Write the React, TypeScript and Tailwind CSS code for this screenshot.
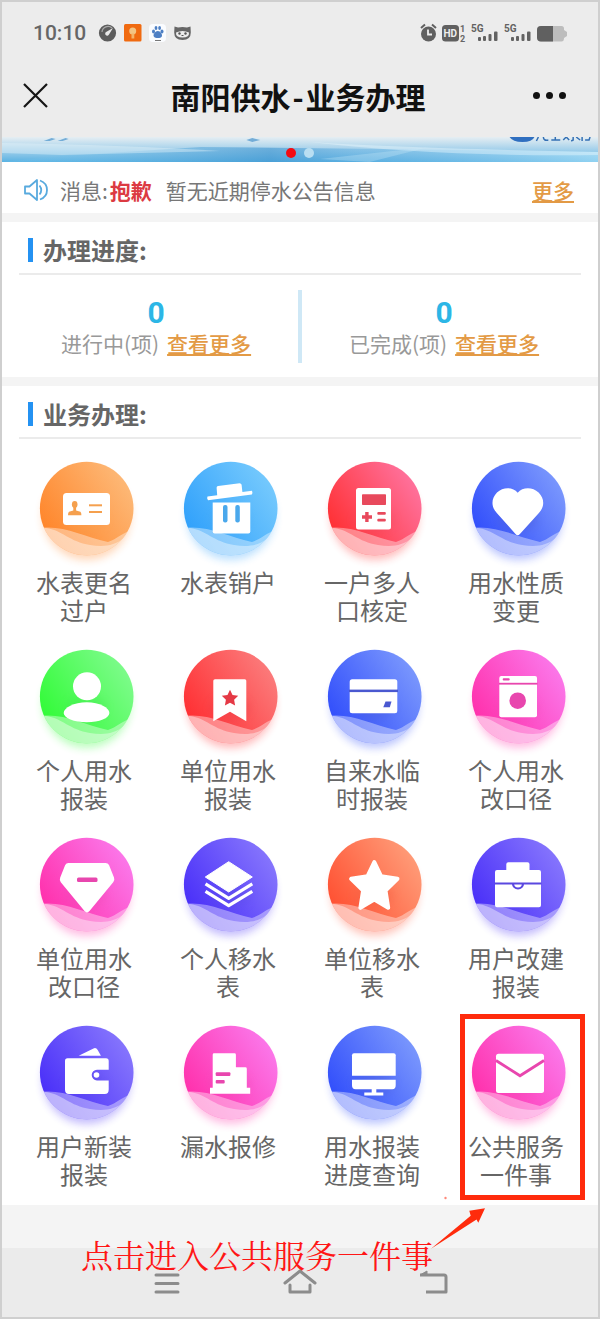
// App.tsx
import React from "react";

type Tone = "orange" | "sky" | "red" | "blue" | "green" | "scarlet" | "pink" | "violet" | "coral";

interface Service {
  name: string;
  tone: Tone;
  glyph: (ink: string) => React.ReactNode;
  marked?: boolean;
}

// from = lower left, to = upper right, ink = details cut in the white glyph
const TONES: Record<Tone, { from: string; to: string; ink: string }> = {
  orange: { from: "#ff8124", to: "#fdbc7c", ink: "#f5a04e" },
  sky: { from: "#2a9dfb", to: "#7accfd", ink: "#4aa8ec" },
  red: { from: "#ff2a2a", to: "#ff76a4", ink: "#e8495c" },
  blue: { from: "#2b48fb", to: "#7f9cfd", ink: "#4a58d0" },
  green: { from: "#2bfb30", to: "#82fb90", ink: "#3be04a" },
  scarlet: { from: "#ff282c", to: "#fb8080", ink: "#e53945" },
  pink: { from: "#ff2aa6", to: "#fb7cee", ink: "#e846ae" },
  violet: { from: "#4429f8", to: "#8a7afd", ink: "#5a48e0" },
  coral: { from: "#ff4a2c", to: "#ffa07c", ink: "#f0583c" },
};

const SERVICES: Service[] = [
  {
    name: "水表更名过户",
    tone: "orange",
    glyph: (ink) => (
      <>
        <rect x="39" y="39" width="47" height="32" rx="3.5" />
        <g fill={ink}>
          <ellipse cx="50.7" cy="50.5" rx="2.8" ry="3.4" />
          <path d="M49.3 52h2.8v4.400l4.300 1.400q1 .6 1 3.400H44q0-2.800 1-3.400l4.300-1.400z" />
          <rect x="65" y="50.300" width="13" height="2" />
          <rect x="65" y="57" width="13" height="2" />
        </g>
      </>
    ),
  },
  {
    name: "水表销户",
    tone: "sky",
    glyph: (ink) => (
      <>
        <path d="M39.500 42.500l9.700-1.200-.6-7.500q0-1.600 1.500-1.800l21.500-2.700q1.700 0 2 1.500l.8 7.300 9.600-1.300q1 2.500-.2 3.700L40 46.300q-1.500-2-.5-3.800z" />
        <path d="M44.700 48.500h37.600v29q0 2-2 2H46.700q-2 0-2-2z" />
        <rect x="55" y="51" width="4.500" height="17.500" rx="2" fill={ink} />
        <rect x="67.300" y="51" width="4.500" height="17.500" rx="2" fill={ink} />
      </>
    ),
  },
  {
    name: "一户多人口核定",
    tone: "red",
    glyph: (ink) => (
      <>
        <rect x="44" y="34" width="35" height="41.500" rx="2.500" />
        <g fill={ink}>
          <rect x="50" y="40.300" width="24" height="10.700" rx=".8" />
          <path d="M53.200 58h3.400v3.300H60v3.400h-3.400V68h-3.400v-3.300H50v-3.400h3.200z" />
          <rect x="65.300" y="58" width="8.500" height="2.800" rx="1" />
          <rect x="65.300" y="64.700" width="8.500" height="2.800" rx="1" />
        </g>
      </>
    ),
  },
  {
    name: "用水性质变更",
    tone: "blue",
    glyph: () => (
      <path d="M61.700 38.700C57 33 47 32.800 41 38.600c-6 6-6 14.500-.2 20.400l18.700 21q2.200 2.500 4.400 0l19-21c5.800-6 5.800-14.400-.3-20.400-6-5.800-16-5.600-20.900.1z" />
    ),
  },
  {
    name: "个人用水报装",
    tone: "green",
    glyph: () => (
      <>
        <circle cx="63" cy="44.300" r="14" />
        <path d="M39.700 71c0-5 10-10.700 23-10.700S85.400 66 85.400 71s-10 9.300-22.700 9.300S39.700 76 39.700 71z" />
      </>
    ),
  },
  {
    name: "单位用水报装",
    tone: "scarlet",
    glyph: (ink) => (
      <>
        <path d="M47 37.300h29.800q1.500 0 1.500 1.500v40.500L62 69.800l-16.700 9.500V38.800q0-1.500 1.700-1.500z" />
        <path
          d="M62 47.800l2.500 5.100 5.700.8-4.100 4 1 5.700-5.100-2.700-5.100 2.700 1-5.700-4.100-4 5.700-.8z"
          fill={ink}
        />
      </>
    ),
  },
  {
    name: "自来水临时报装",
    tone: "blue",
    glyph: (ink) => (
      <>
        <rect x="37.700" y="37.300" width="47.600" height="34" rx="2.500" />
        <rect x="37" y="47.600" width="49" height="2.500" fill={ink} />
        <path d="M73.500 59.600h6l-1.700 5.600h-6.500z" fill={ink} />
      </>
    ),
  },
  {
    name: "个人用水改口径",
    tone: "pink",
    glyph: (ink) => (
      <>
        <rect x="43.300" y="34" width="37.700" height="41.300" rx="2" />
        <g fill={ink}>
          <rect x="43" y="40.800" width="38.500" height="1.800" />
          <rect x="46.700" y="36.300" width="7" height="2.200" rx="1" />
          <circle cx="61.700" cy="58.700" r="8.300" />
        </g>
      </>
    ),
  },
  {
    name: "单位用水改口径",
    tone: "pink",
    glyph: (ink) => (
      <>
        <path d="M44.500 33h37q2.500 0 3.500 2l5 12.500q1 2.500-.8 4.800L65.500 81q-2.500 2.800-5 0L36.800 52.300q-1.600-2.300-.6-4.800l5-12.500q1-2 3.300-2z" />
        <rect x="53" y="47.500" width="20.500" height="4.600" rx="1.500" fill={ink} />
      </>
    ),
  },
  {
    name: "个人移水表",
    tone: "violet",
    glyph: () => (
      <>
        <path d="M60.700 31.700L84.300 47 60.700 62 37.300 47z" stroke="#fff" strokeLinejoin="round" />
        <path
          d="M37.500 53.800l23.200 14.500 23.600-14.500M37.500 61.300l23.200 14.300 23.600-14.300"
          fill="none"
          stroke="#fff"
          strokeWidth="3.200"
          strokeLinejoin="round"
        />
      </>
    ),
  },
  {
    name: "单位移水表",
    tone: "coral",
    glyph: () => (
      <path
        d="M62.300 32l6.700 14.200 16.500 2.600-12 11.800 2.700 17.200-13.900-8.200-13.900 8.200 2.700-17.200-12-11.800 16.500-2.600z"
        stroke="#fff"
        strokeWidth="4"
        strokeLinejoin="round"
      />
    ),
  },
  {
    name: "用户改建报装",
    tone: "violet",
    glyph: (ink) => (
      <>
        <path d="M52.300 32.300h19.200q2 0 2 2V40H83q2 0 2 2v33.300q0 2-2 2H41q-2 0-2-2V42q0-2 2-2h9.300v-5.700q0-2 2-2z" />
        <g fill="none" stroke={ink} strokeWidth="2.200">
          <path d="M38.500 53.500h47" />
          <path d="M57 53.500a5 5 0 0 0 10 0" />
        </g>
      </>
    ),
  },
  {
    name: "用户新装报装",
    tone: "violet",
    glyph: () => (
      <>
        <path d="M54.700 37.700l14.800-7.300q2.700-1 4.200 1.600l3.200 5.700z" />
        <path d="M43.500 40.300H82q2.700 0 2.700 2.700v8.800H73a5.300 5.300 0 0 0 0 10.600h11.700v9.100q0 4.500-4 4.500H45q-4 0-4-4.500V43q0-2.700 2.500-2.700z" />
        <circle cx="72.500" cy="57" r="2.800" />
      </>
    ),
  },
  {
    name: "漏水报修",
    tone: "pink",
    glyph: (ink) => (
      <>
        <path d="M46 35.300h20.500q1.400 0 1.400 1.400v12.600h9.500q1.400 0 1.400 1.400v19h3.400v6H42v-6h2.700v-33q0-1.400 1.300-1.400z" />
        <rect x="47.700" y="54.300" width="14.700" height="3.600" rx="1" fill={ink} />
        <rect x="47.700" y="62" width="9" height="3.500" rx="1" fill={ink} />
      </>
    ),
  },
  {
    name: "用水报装进度查询",
    tone: "blue",
    glyph: () => (
      <>
        <path d="M42 35.300h39.700q2 0 2 2v20.500H40V37.300q0-2 2-2z" />
        <path d="M40 61.700h43.700v5.500q0 4-3.500 4H64.300v3.200h7v3.200h-19v-3.200h7.400v-3.200H43.500q-3.500 0-3.500-4z" />
      </>
    ),
  },
  {
    name: "公共服务一件事",
    tone: "pink",
    marked: true,
    glyph: (ink) => (
      <>
        <rect x="40" y="35.700" width="48" height="39.300" rx="2.500" />
        <path d="M40 42.500l24 15.300 24-15.300" fill="none" stroke={ink} strokeWidth="2.800" />
      </>
    ),
  },
];

function ServiceIcon({ id, tone, glyph }: { id: string; tone: Tone; glyph: Service["glyph"] }) {
  const { from, to, ink } = TONES[tone];
  return (
    <svg className="h-[114px] w-[120px]" viewBox="0 0 120 114" aria-hidden="true">
      <defs>
        <linearGradient id={`${id}-fill`} x1="0.1" y1="0.7" x2="0.9" y2="0.2">
          <stop offset="0" stopColor={from} />
          <stop offset="1" stopColor={to} />
        </linearGradient>
        <clipPath id={`${id}-clip`}>
          <circle cx="62.700" cy="54.500" r="46.800" />
        </clipPath>
        <filter id={`${id}-blur`} x="-30%" y="-30%" width="160%" height="160%">
          <feGaussianBlur stdDeviation="4" />
        </filter>
      </defs>
      <circle cx="62.700" cy="62" r="44" fill={from} opacity="0.32" filter={`url(#${id}-blur)`} />
      <g clipPath={`url(#${id}-clip)`}>
        <rect width="120" height="114" fill={`url(#${id}-fill)`} />
      </g>
      <g fill={ink} opacity="0.3" transform="translate(0 2)" filter={`url(#${id}-blur)`}>
        <ellipse cx="62" cy="64" rx="20" ry="12" />
      </g>
      {/* waves */}
      <g clipPath={`url(#${id}-clip)`} fill="#fff">
        <path d="M10 73.500H24C44 73.500 62 83 84 88C93 85 98 79 112 74V110H10Z" opacity="0.38" />
        <path d="M10 74H22C38 76 46 88 66 91C80 93 90 92 100 84L112 78V110H10z" opacity="0.4" />
      </g>
      <g fill="#fff">{glyph(ink)}</g>
    </svg>
  );
}

function SignalIcon() {
  return (
    <svg className="h-5 w-[29px]" viewBox="0 0 29 20" fill="#626262" aria-hidden="true">
      <text x="0" y="8.500" fontSize="10" fontWeight="700" fontFamily="Roboto, sans-serif">
        5G
      </text>
      <rect x="7" y="14" width="3" height="4" rx="1" />
      <rect x="12" y="13" width="3" height="5" rx="1" />
      <rect x="17.500" y="11" width="3" height="7" rx="1" />
      <rect x="23" y="8.500" width="3.500" height="9.500" rx="1" />
    </svg>
  );
}

function StatusBar() {
  return (
    <div className="flex h-[62px] items-center justify-between pl-[31px] pr-[31px]">
      <div className="flex items-center">
        <span className="w-16 font-[Roboto,sans-serif] text-[21px] font-medium leading-6 text-[#666]">10:10</span>
        <svg className="h-5 w-24" viewBox="0 0 96 20" aria-hidden="true">
          <circle cx="10.500" cy="10" r="8.600" fill="#5c5c5c" />
          <path d="M5 9a6 6 0 0 1 10-4" fill="none" stroke="#a8a8a8" strokeWidth="1.200" />
          <path d="M16 5l-4 6.500a2 2 0 1 1-2.500-2.700z" fill="#e8e8e8" />
          <rect x="27" y="1" width="17.500" height="17.500" rx="1.500" fill="#f06a10" />
          <circle cx="35.700" cy="8" r="3.500" fill="#f3c483" />
          <path d="M34.500 10.500h2.800v5h-2.800z" fill="#f3b469" />
          <rect x="52" y="1" width="17" height="18" rx="4" fill="#fafcff" />
          <g fill="#4d7fc4">
            <ellipse cx="56.500" cy="8.500" rx="1.500" ry="2" />
            <ellipse cx="59" cy="5" rx="1.400" ry="2" />
            <ellipse cx="62.600" cy="5" rx="1.400" ry="2" />
            <ellipse cx="65" cy="8.500" rx="1.500" ry="2" />
            <path d="M60.800 8c2.500 0 5 3.500 4 5.500s-6.800 2-8 0S58.300 8 60.800 8z" />
            <rect x="58" y="17" width="6" height="1" fill="#777" />
          </g>
          <path
            d="M77.500 3.500l3.500 1q4.500-1 9 0l3.500-1 .3 6q0 7.500-8.300 7.500t-8.300-7.500z"
            fill="#666"
          />
          <path d="M79 9.500q6.500-3 13 0 .5 5-6.500 5t-6.500-5z" fill="#ececec" />
          <circle cx="82.500" cy="10.500" r="1.200" fill="#555" />
          <circle cx="88.500" cy="10.500" r="1.200" fill="#555" />
          <path d="M84.500 12.500h2" stroke="#555" />
        </svg>
      </div>
      <div className="flex items-center gap-1">
        <svg className="h-5 w-12" viewBox="0 0 48 20" aria-hidden="true">
          <circle cx="9.500" cy="11" r="7.500" fill="#606060" />
          <path d="M2 5l4-3.500M17 5l-4-3.500" stroke="#606060" strokeWidth="2" />
          <path d="M9 6.500v5h4" fill="none" stroke="#eee" strokeWidth="1.800" />
          <rect x="23" y="2" width="17" height="16.500" rx="3.500" fill="#606060" />
          <text x="24.500" y="14" fontSize="10" fontWeight="700" fill="#eee" fontFamily="Roboto, sans-serif">
            HD
          </text>
          <text x="41" y="9" fontSize="9" fontWeight="700" fill="#666" fontFamily="Roboto, sans-serif">
            1
          </text>
          <text x="41" y="18.500" fontSize="9" fontWeight="700" fill="#666" fontFamily="Roboto, sans-serif">
            2
          </text>
        </svg>
        <SignalIcon />
        <SignalIcon />
        <svg className="h-5 w-[30px]" viewBox="0 0 30 20" aria-hidden="true">
          <path d="M4 3h20.500q2.500 0 2.500 2.500v1.500l3 2v4l-3 2q0 3.500-2.500 3.500H4q-4 0-4-4v-7.500Q0 3 4 3z" fill="#bdbdbd" />
          <path d="M4 3h12v15.500H4q-4 0-4-4v-7.500Q0 3 4 3z" fill="#606060" />
        </svg>
      </div>
    </div>
  );
}

function TitleBar() {
  return (
    <header className="flex h-[73px] items-center justify-between pb-[10px] pl-5 pr-6">
      <button type="button" aria-label="关闭" className="w-12">
        <svg className="h-7 w-7" viewBox="0 0 28 28" fill="none" stroke="#151515" strokeWidth="2.200">
          <path d="M2 2l23 23M25 2L2 25" />
        </svg>
      </button>
      <h1 className="text-[30px] font-bold leading-9 text-[#111]">
        南阳供水<span className="mx-[2px]">-</span>业务办理
      </h1>
      <button type="button" aria-label="更多操作" className="flex w-12 justify-center gap-[6px]">
        <span className="h-[7px] w-[7px] rounded-full bg-[#111]" />
        <span className="h-[7px] w-[7px] rounded-full bg-[#111]" />
        <span className="h-[7px] w-[7px] rounded-full bg-[#111]" />
      </button>
    </header>
  );
}

function Banner() {
  return (
    <div className="relative h-[25px] overflow-hidden bg-linear-to-b from-[#e6eef2] to-[#58b2e2]">
      <svg className="block h-full w-full" viewBox="0 0 600 25" preserveAspectRatio="none" aria-hidden="true">
        <defs>
          <linearGradient id="sea" x1="0" x2="1" y1="0" y2="0">
            <stop offset="0" stopColor="#7cc9f0" stopOpacity="0.2" />
            <stop offset="0.45" stopColor="#3f94cf" stopOpacity="0.6" />
            <stop offset="0.6" stopColor="#59aadf" stopOpacity="0.4" />
            <stop offset="1" stopColor="#b4e6fb" stopOpacity="0.6" />
          </linearGradient>
        </defs>
        <path d="M0 25l60-6 140-9 180 2 220 3v10z" fill="url(#sea)" />
        <path d="M0 6q120 2 220 8L60 18 0 16z" fill="#e8f4fa" opacity="0.4" />
        <path d="M310 5q90 6 290 10v3q-160 2-290-13z" fill="#eefaff" opacity="0.4" />
        <path d="M320 22l110-12-60 15z" fill="#cdeaf8" opacity="0.3" />
        <path
          d="M42 4l8-3 4 1-6 2zM56 4l8-3 3 1-6 2zM246 3l6-2 8 2-8 2zM382 1l4 3M388 1l4 3"
          fill="#4a94cc"
          opacity="0.7"
        />
        <path d="M511 0h25q-2 5-12 5t-13-5z" fill="#2f6fc0" />
        <path d="M540 0l-2 4M545 0q0 4 5 3M553 3h9M557 0v3M565 3l3-3 3 3M575 0v3l-2 1M578 0l4 3M584 0v4M587 3h4l1-3" stroke="#3570b4" strokeWidth="1.500" fill="none" />
      </svg>
      <div className="absolute inset-x-0 bottom-1 flex justify-center gap-2">
        <span className="h-[10px] w-[10px] rounded-full bg-[#f40b12]" />
        <span className="h-[10px] w-[10px] rounded-full bg-[#b9def2]" />
      </div>
    </div>
  );
}

function SectionTitle({ children }: { children: React.ReactNode }) {
  return (
    <div className="mx-[17px] flex h-[53px] items-center border-b-2 border-[#ebebeb] pl-[9px] pt-[5px]">
      <span className="mr-[10px] h-6 w-[5px] bg-[#2492f2]" />
      <h2 className="text-[24px] font-bold leading-8 text-[#666]">{children}</h2>
    </div>
  );
}

function Progress({ label, count }: { label: string; count: number }) {
  return (
    <div className="flex flex-col items-center pt-2">
      <span className="font-[Roboto,sans-serif] text-[30px] font-bold leading-[30px] text-[#2cb6e6]">{count}</span>
      <p className="text-[21px] leading-[30px] text-[#999]">
        {label}
        <a href="#more" className="ml-2 font-medium text-[#e39a45] underline underline-offset-2">
          查看更多
        </a>
      </p>
    </div>
  );
}

export default function App() {
  return (
    <div className="border-2 border-[#cfcfcf] bg-[#f4f4f4] font-['Noto_Sans_CJK_SC',sans-serif]">
      {/* Header */}
      <div className="bg-[#ececec]">
        <StatusBar />
        <TitleBar />
      </div>
      <Banner />

      {/* Notice */}
      <div className="flex h-[51px] items-center bg-white pl-[22px] pr-6 pt-1 text-[21px] leading-7 text-[#777]">
        <svg className="mr-3 h-6 w-6" viewBox="0 0 24 24" fill="none" stroke="#58aade" strokeWidth="1.800" aria-hidden="true">
          <path d="M1 8.500h4.500L13 2v20l-7.500-6.500H1z" strokeLinejoin="round" />
          <path d="M15.500 7.500q3.500 4.500 0 9M16 2.500q7 2.500 7 9.500t-7 9.500" />
        </svg>
        <span>消息:</span>
        <strong className="ml-[2px] text-[#dc3a42]">抱歉</strong>
        <span className="ml-[14px]">暂无近期停水公告信息</span>
        <a href="#notice" className="ml-auto font-medium text-[#e39a45] underline underline-offset-2">
          更多
        </a>
      </div>

      {/* Progress */}
      <section className="mt-[9px] bg-white pb-[19px]">
        <SectionTitle>办理进度:</SectionTitle>
        <div className="grid grid-cols-2 px-[10px] pt-[15px]">
          <Progress label="进行中(项)" count={0} />
          <div className="relative">
            <span className="absolute -left-[2px] top-0 h-[73px] w-1 bg-[#cfe8f6]" />
            <Progress label="已完成(项)" count={0} />
          </div>
        </div>
      </section>

      {/* Services */}
      <section className="mt-[9px] bg-white pb-[17px]">
        <SectionTitle>业务办理:</SectionTitle>
        <div className="grid grid-cols-4 gap-y-[18px] px-[10px] pt-[15px]">
          {SERVICES.map((service, i) => (
            <a key={service.name} href={`#service-${i}`} className="relative flex flex-col items-center">
              <ServiceIcon id={`svc${i}`} tone={service.tone} glyph={service.glyph} />
              <span className="min-h-14 w-[98px] text-center text-[24px] leading-7 text-[#666]">{service.name}</span>
              {service.marked && (
                <span className="absolute -bottom-3 -top-1 left-4 right-[3px] border-[5px] border-[#ff2b0c]" />
              )}
            </a>
          ))}
        </div>
      </section>

      {/* Bottom navigation */}
      <footer className="relative mt-[43px] bg-[#ebebeb]">
        <nav className="mx-auto grid h-[69px] w-[400px] grid-cols-3 items-center justify-items-center">
          <button type="button" aria-label="菜单">
            <svg className="h-7 w-8" viewBox="0 0 32 28" stroke="#8c8c8c" strokeWidth="3" strokeLinecap="round">
              <path d="M5 6h22M5 14.500h22M5 23h22" />
            </svg>
          </button>
          <button type="button" aria-label="主页">
            <svg className="h-7 w-9" viewBox="0 0 36 28" fill="none" stroke="#8c8c8c" strokeWidth="3" strokeLinecap="round" strokeLinejoin="round">
              <path d="M3 14L18 2l15 12M8 16v7h20v-7" />
            </svg>
          </button>
          <button type="button" aria-label="返回">
            <svg className="h-7 w-8" viewBox="0 0 32 28" fill="none" stroke="#8c8c8c" strokeWidth="3" strokeLinejoin="round">
              <path d="M3 6h24q2 0 2 2v15H9" />
              <path d="M3 6l7-4v4z" fill="#8c8c8c" strokeWidth="1" />
            </svg>
          </button>
        </nav>

        {/* Hint for the marked entry */}
        <p className="absolute -top-[14px] left-[79px] whitespace-nowrap font-['Noto_Serif_CJK_SC','Noto_Sans_CJK_SC',serif] text-[32px] leading-10 text-[#ff1616]">
          点击进入公共服务一件事
        </p>
        <svg className="absolute -top-[54px] left-[428px] h-14 w-16" viewBox="0 0 64 56" fill="#ff2b0c" aria-hidden="true">
          <path d="M1 54.700L40.700 21.700 39.300 16.700 55 14.300 48.300 28.700 46.500 25.500z" />
          <circle cx="15.500" cy="4" r="1.200" fill="#ff8a7a" />
        </svg>
      </footer>
    </div>
  );
}
